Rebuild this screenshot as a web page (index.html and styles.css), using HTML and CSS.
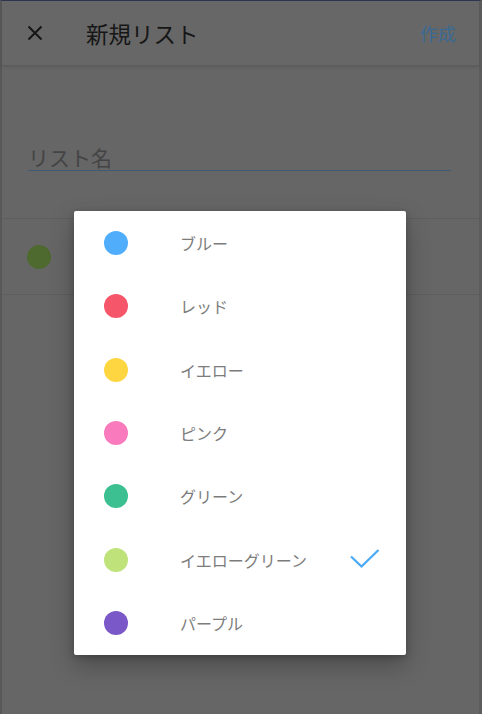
FILE: index.html
```html
<!DOCTYPE html>
<html lang="ja">
<head>
<meta charset="utf-8">
<link rel="stylesheet" href="styles.css">
</head>
<body>
<div class="screen">
  <header class="appbar">
    <svg class="close" width="16" height="16" viewBox="0 0 16 16"><path d="M1.5 1.5L14.5 14.5M14.5 1.5L1.5 14.5" stroke="#161616" stroke-width="2" fill="none"/></svg>
    <h1 class="title">新規リスト</h1>
    <span class="create">作成</span>
  </header>
  <section class="form">
    <div class="field"><span class="placeholder">リスト名</span></div>
  </section>
  <div class="color-row">
    <span class="dot dim-green"></span>
  </div>
</div>
<div class="dialog">
  <div class="item"><span class="swatch c-blue"></span><span class="label">ブルー</span></div>
  <div class="item"><span class="swatch c-red"></span><span class="label">レッド</span></div>
  <div class="item"><span class="swatch c-yellow"></span><span class="label">イエロー</span></div>
  <div class="item"><span class="swatch c-pink"></span><span class="label">ピンク</span></div>
  <div class="item"><span class="swatch c-green"></span><span class="label">グリーン</span></div>
  <div class="item"><span class="swatch c-ygreen"></span><span class="label">イエローグリーン</span>
    <svg class="check" width="30" height="20" viewBox="0 0 30 20"><path d="M1 7.5L11.5 17.5L28.5 1" stroke="#4aa9f5" stroke-width="2.2" fill="none"/></svg>
  </div>
  <div class="item"><span class="swatch c-purple"></span><span class="label">パープル</span></div>
</div>
</body>
</html>
```
FILE: styles.css
```css
* { box-sizing: border-box; margin: 0; padding: 0; }
html, body { width: 482px; height: 714px; overflow: hidden; }
body {
  background: #666666;
  font-family: "Noto Sans CJK JP", "Noto Sans", sans-serif;
  position: relative;
}
.screen {
  height: 714px;
  border-top: 1px solid #2c3652;
  border-left: 2px solid #585858;
  border-right: 3px solid #5c5c5c;
  background: #666666;
}
.appbar {
  height: 65px;
  display: flex;
  align-items: center;
  padding: 0 23px 0 25px;
  background: #676767;
  border-bottom: 1px solid #5c5c5c;
  box-shadow: 0 1px 3px rgba(0,0,0,0.12);
}
.close { flex: none; }
.title {
  margin-left: 43px;
  font-size: 22.5px;
  font-weight: 400;
  color: #161616;
  flex: 1;
}
.create {
  font-size: 18px;
  color: #3a6a93;
}
.form {
  padding: 78px 28px 0 26px;
  height: 153px;
  border-bottom: 1px solid #5e5e5e;
}
.field {
  border-bottom: 1.5px solid #3e5b76;
  height: 27px;
  display: flex;
  align-items: flex-end;
}
.placeholder {
  font-size: 21px;
  line-height: 26px;
  color: #444444;
}
.color-row {
  height: 76px;
  display: flex;
  align-items: center;
  padding-left: 25px;
  border-bottom: 1px solid #5e5e5e;
}
.dot {
  width: 24px; height: 24px; border-radius: 50%;
}
.dim-green { background: #4e6a2e; }
.dialog {
  position: absolute;
  left: 74px;
  top: 211px;
  width: 332px;
  height: 444px;
  background: #ffffff;
  border-radius: 2px;
  box-shadow: 0 10px 24px rgba(0,0,0,0.28), 0 2px 6px rgba(0,0,0,0.2);
  display: flex;
  flex-direction: column;
}
.item {
  height: 63.43px;
  display: flex;
  align-items: center;
  padding-left: 30px;
}
.swatch {
  width: 24px; height: 24px; border-radius: 50%; flex: none;
}
.label {
  margin-left: 52px;
  font-size: 16px;
  color: #7c7c7c;
  width: 170px;
}
.check { margin-left: 0; margin-top: -2px; }
.c-blue { background: #4fadfb; }
.c-red { background: #f5566a; }
.c-yellow { background: #fdd642; }
.c-pink { background: #fa7bbd; }
.c-green { background: #3cbf91; }
.c-ygreen { background: #bfe37a; }
.c-purple { background: #7a58c8; }
```
